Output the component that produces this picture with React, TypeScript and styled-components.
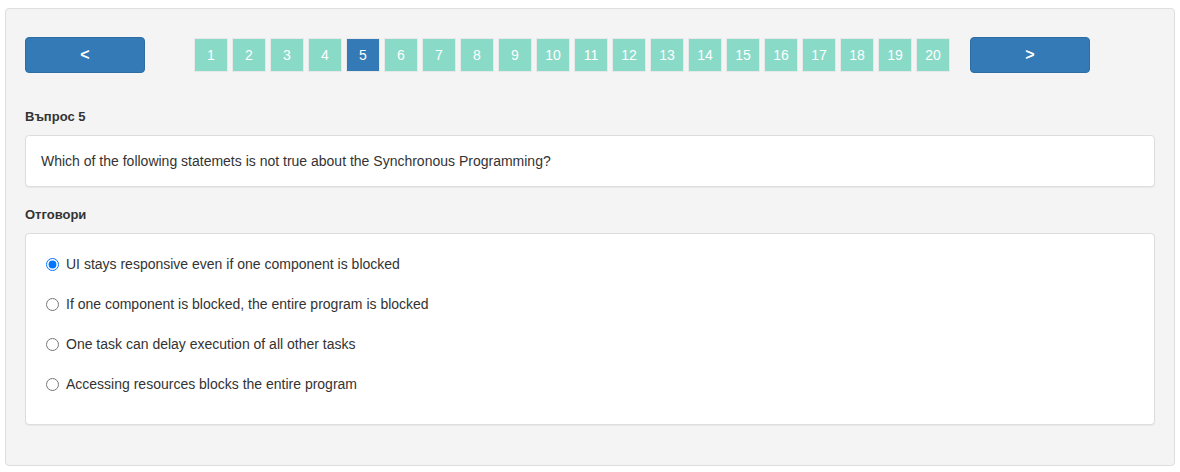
import React from "react";
import styled, { createGlobalStyle } from "styled-components";

const Global = createGlobalStyle`
  html, body { margin: 0; padding: 0; background: #ffffff; }
  body { font-family: "Liberation Sans", Arial, sans-serif; color: #333333; }
  * { box-sizing: border-box; }
`;

const Page = styled.div`
  padding: 8px 5px 7px 5px;
`;

const Panel = styled.div`
  background: #f4f4f4;
  border: 1px solid #dedede;
  border-radius: 4px;
  padding: 28px 19px 39px 19px;
  height: 458px;
`;

const Nav = styled.div`
  display: flex;
  align-items: center;
  height: 36px;
`;

const NavButton = styled.button`
  width: 120px;
  height: 36px;
  background: #337ab7;
  border: 1px solid #2e6da4;
  border-radius: 4px;
  color: #ffffff;
  font-family: "Liberation Sans", Arial, sans-serif;
  font-size: 16px;
  font-weight: bold;
  padding: 0;
  cursor: pointer;
`;

const Pages = styled.div`
  display: flex;
  gap: 4px;
  margin-left: 49px;
  margin-right: 20px;
`;

const PageBox = styled.div<{ $active?: boolean }>`
  width: 34px;
  height: 34px;
  border: 1px solid #e8e8e8;
  background: ${(p) => (p.$active ? "#337ab7" : "#8adac8")};
  color: #ffffff;
  font-size: 14px;
  display: flex;
  align-items: center;
  justify-content: center;
`;

const Label = styled.div<{ $top: number }>`
  margin-top: ${(p) => p.$top}px;
  font-size: 13px;
  font-weight: bold;
  color: #333333;
  line-height: 18px;
`;

const Card = styled.div`
  background: #ffffff;
  border: 1px solid #dddddd;
  border-radius: 4px;
  box-shadow: 0 1px 1px rgba(0, 0, 0, 0.05);
  margin-top: 9px;
`;

const QuestionCard = styled(Card)`
  height: 52px;
  padding: 0 15px;
  display: flex;
  align-items: center;
  font-size: 14px;
`;

const AnswersCard = styled(Card)`
  height: 192px;
  padding: 20px 20px 0 20px;
  display: flex;
  flex-direction: column;
`;

const Option = styled.label`
  display: flex;
  align-items: center;
  flex-shrink: 0;
  height: 20px;
  margin-bottom: 20px;
  font-size: 14px;
  color: #333333;
  cursor: pointer;
`;

const Radio = styled.input`
  width: 13px;
  height: 13px;
  margin: 0 7px 0 0;
  accent-color: #0075ff;
`;

const answers = [
  "UI stays responsive even if one component is blocked",
  "If one component is blocked, the entire program is blocked",
  "One task can delay execution of all other tasks",
  "Accessing resources blocks the entire program",
];

export default function App() {
  const [selected, setSelected] = React.useState(0);
  return (
    <>
      <Global />
      <Page>
        <Panel>
          <Nav>
            <NavButton>&lt;</NavButton>
            <Pages>
              {Array.from({ length: 20 }, (_, i) => (
                <PageBox key={i} $active={i === 4}>
                  {i + 1}
                </PageBox>
              ))}
            </Pages>
            <NavButton>&gt;</NavButton>
          </Nav>
          <Label $top={35}>Въпрос 5</Label>
          <QuestionCard>
            Which of the following statemets is not true about the Synchronous Programming?
          </QuestionCard>
          <Label $top={19}>Отговори</Label>
          <AnswersCard>
            {answers.map((a, i) => (
              <Option key={i}>
                <Radio
                  type="radio"
                  name="answer"
                  checked={selected === i}
                  onChange={() => setSelected(i)}
                />
                {a}
              </Option>
            ))}
          </AnswersCard>
        </Panel>
      </Page>
    </>
  );
}
